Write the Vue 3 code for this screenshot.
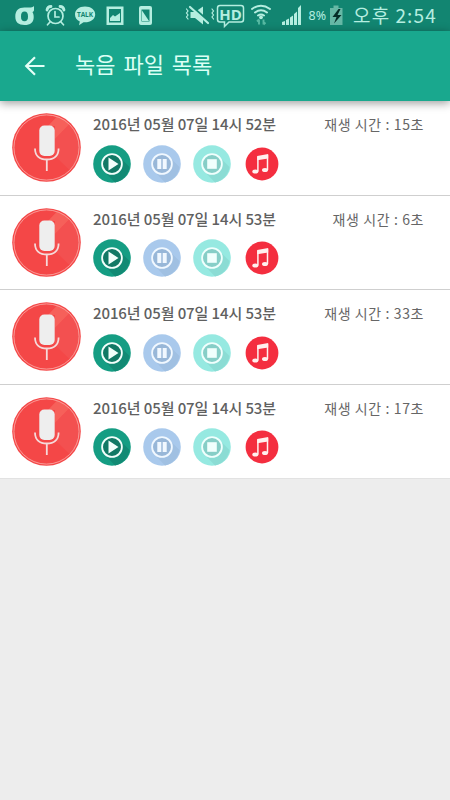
<template>
  <div class="screen">
    <div class="status-bar">
      <svg class="status-icons" width="345" height="31" viewBox="0 0 345 31">
        <g fill="#b5eee0">
          <path
            fill-rule="evenodd"
            d="M34 6v4c0 1-.7 1.600-1.600 2 .9 1.300 1.300 2.800 1.300 5 0 5.500-3.200 8-9.200 8s-9.200-2.700-9.200-8.500S18.500 7.500 24.500 7.500H29c2.400 0 4-.2 5-1.500zM24.500 11.500c-2.500 0-3.500 1.600-3.500 5s1 4.700 3.500 4.700 3.500-1.300 3.500-4.700-1-5-3.500-5z"
          />
          <path
            d="M85 6.500c-6 0-10 3.500-10 8 0 3.200 1.800 5.600 4.800 7l-.8 3.700 4.500-2.900c7 .5 11.700-3.200 11.700-7.800 0-4.500-4.200-8-10.200-8z"
          />
          <path fill-rule="evenodd" d="M106.500 6.500h17v18.500h-17zM109 9v13.500h12V9z" />
          <path d="M110 21v-3l3-3 2 1.500 5-3.500v8z" />
          <path
            fill-rule="evenodd"
            d="M141 6h9q2 0 2 2v15q0 2-2 2h-9q-2 0-2-2V8q0-2 2-2zM141.500 9.500v12h8v-12z"
          />
          <path d="M142 10.500l7 10.500h-7z" />
          <path d="M190.500 12h4.500l8-5.500v18l-8-6.500h-4.500z" />
          <path d="M282 25v-3l3-1v4zM286 25v-5l3-1.500V25zM290 25v-7.500l3-2V25zM294 25V14l3-2.500V25zM298 25V8l3-3v20z" />
          <circle cx="261" cy="17.300" r="1.900" />
        </g>
        <g fill="none" stroke="#b5eee0" stroke-width="1.700" stroke-linecap="round">
          <circle cx="55.500" cy="16" r="7.500" />
          <path d="M55 11.500V17h4M50 22l-2.500 2.800M61 22l2.500 2.800" />
          <path d="M47 10q.5-3.500 4-3.500M64 10q-.5-3.500-4-3.500" stroke-width="2.800" />
          <path d="M191 6l18 16" stroke="#128571" stroke-width="3" />
          <path d="M190 7l18 16" stroke-width="2.200" />
          <path
            d="M186.500 9l1.500 2-1.500 2 1.500 2-1.500 2 1.500 2M212 9l1.500 2-1.500 2 1.500 2-1.500 2 1.500 2"
            stroke-width="1.200"
          />
          <path
            d="M220 5.500h21q2.500 0 2.500 2.500v11.500q0 2.500-2.500 2.500h-12l-4.500 4.500V22H220q-2.500 0-2.500-2.500V8q0-2.500 2.500-2.500z"
            stroke-width="1.500"
          />
          <path d="M252 9q9-6.500 18 0M255 12.500q6-4.500 12 0M258 15.500q3-2 6 0" stroke-width="2" />
        </g>
        <path
          d="M259 24.500v-5M257 21.500l2-2M263.500 19.500v5M265.500 22.500l-2 2"
          fill="none"
          stroke="#57b9a2"
          stroke-width="1.900"
        />
        <text x="85" y="17.300" class="talk" text-anchor="middle">TALK</text>
        <text x="230.500" y="19.500" class="hd" text-anchor="middle">HD</text>
        <text x="308.500" y="19.800" class="percent" textLength="17.500" lengthAdjust="spacingAndGlyphs">8%</text>
        <path d="M330 8h3.500V5.500h5V8h4v17H330z" fill="#66b8a6" />
        <path d="M338.500 9l-6 8h4l-2.500 6.500 7.500-8.500h-4l3-6z" fill="#062e29" />
      </svg>
      <div class="clock"><span>오후</span><span>2:54</span></div>
    </div>

    <div class="toolbar">
      <svg class="back" width="22" height="22" viewBox="0 0 22 22">
        <path d="M20.500 11H2.500M11 2.200L2.200 11l8.800 8.800" />
      </svg>
      <h1>녹음 파일 목록</h1>
    </div>

    <ul class="record-list">
      <li v-for="(record, i) in records" :key="i" class="record">
        <svg class="mic" width="70" height="70" viewBox="0 0 70 70">
          <circle cx="34.500" cy="34.500" r="34.300" fill="#f44747" />
          <path d="M43 26L57.500 11A32.800 32.800 0 0 1 58 57.500L43 43z" fill="#f35050" />
          <path d="M43 26L57.500 11A32.800 32.800 0 0 0 45 3.500L36 13h7z" fill="#f6605a" />
          <circle cx="34.500" cy="34.500" r="32.600" fill="none" stroke="#fbb0ac" stroke-width=".8" />
          <rect x="27.300" y="12.500" width="15.400" height="30.500" rx="5" fill="#eee" />
          <path
            d="M23 35.500c0 7.300 4.700 11 11.800 11s11.800-3.700 11.800-11M34.800 46.500V58"
            fill="none"
            stroke="#f5dada"
            stroke-width="1.800"
          />
        </svg>

        <div class="body">
          <div class="info">
            <span class="date">{{ record.date }}</span>
            <span class="duration">재생 시간 : {{ record.seconds }}초</span>
          </div>

          <div class="controls">
            <button v-for="c in controls" :key="c.name" :class="c.name">
              <svg width="38" height="38" viewBox="0 0 38 38">
                <circle cx="19" cy="19" r="18.800" :fill="c.color" />
                <path d="M26.500 12L36.500 22A18.800 18.800 0 0 1 22 37.500L12 27z" :fill="c.shade" />
                <circle cx="19" cy="19" r="9.900" :fill="c.inner" :stroke="c.line" stroke-width="1.800" />
                <path :d="c.glyph" :fill="c.line" />
              </svg>
            </button>
            <button class="music">
              <svg width="34" height="34" viewBox="0 0 34 34">
                <circle cx="17" cy="17" r="16.400" fill="#f42e3f" />
                <path d="M12.900 9.500v15M22.500 8v15" fill="none" stroke="#fff0ee" stroke-width="1.500" />
                <path d="M12.200 9l11-1.900v4.300l-11 1.900z" fill="#fff0ee" />
                <ellipse cx="10.300" cy="24.500" rx="3" ry="2" fill="#fff0ee" />
                <ellipse cx="20" cy="22.900" rx="3" ry="2" fill="#fff0ee" />
              </svg>
            </button>
          </div>
        </div>
      </li>
    </ul>
  </div>
</template>

<script setup>
import { ref } from "vue";

const records = ref([
  { date: "2016년 05월 07일 14시 52분", seconds: 15 },
  { date: "2016년 05월 07일 14시 53분", seconds: 6 },
  { date: "2016년 05월 07일 14시 53분", seconds: 33 },
  { date: "2016년 05월 07일 14시 53분", seconds: 17 },
]);

const controls = [
  {
    name: "play",
    color: "#159d83",
    shade: "#128a74",
    inner: "#117965",
    line: "#f2fffb",
    glyph: "M15.500 12.500v13l10-6.500z",
  },
  {
    name: "pause",
    color: "#a9c9ec",
    shade: "#a0c0e2",
    inner: "#98b7d8",
    line: "#f1f8ff",
    glyph: "M14.300 14h4v10h-4zM19.700 14h4v10h-4z",
  },
  {
    name: "stop",
    color: "#96e9e1",
    shade: "#8bdcd4",
    inner: "#86cec7",
    line: "#f0fffd",
    glyph: "M14.200 14.200h9.600v9.600h-9.600z",
  },
];
</script>

<style>
body {
  background: #ededed;
}
</style>

<style scoped>
.screen {
  height: 800px;
  overflow: hidden;
  background: #ededed;
  font-family: "Noto Sans CJK KR", sans-serif;
}

.status-bar {
  display: flex;
  align-items: center;
  height: 31px;
  background: #128571;
  color: #b5eee0;
}

.status-icons {
  flex: none;
}

.talk {
  font: bold 6.5px "Open Sans", sans-serif;
  fill: #128571;
}

.hd {
  font: bold 15px "Open Sans", sans-serif;
  fill: #b5eee0;
}

.percent {
  font: 13px "Noto Sans", sans-serif;
  fill: #b5eee0;
}

.clock {
  display: flex;
  gap: 5px;
  margin-left: 8px;
  font-size: 19px;
  line-height: 29px;
  height: 31px;
  letter-spacing: 1.2px;
  white-space: nowrap;
}

.toolbar {
  position: relative;
  display: flex;
  align-items: center;
  height: 70px;
  padding-left: 24px;
  background: #19a88e;
  box-shadow: 0 2px 9px rgba(0, 0, 0, 0.4);
}

.back {
  fill: none;
  stroke: #e3fff7;
  stroke-width: 2.2;
}

.toolbar h1 {
  margin: 0 0 7px 29px;
  color: #dcfff5;
  font-size: 22px;
  font-weight: 400;
  line-height: 32px;
  word-spacing: 3px;
}

.record-list {
  margin: 0;
  padding: 0;
  list-style: none;
}

.record {
  display: flex;
  box-sizing: border-box;
  height: 94.6px;
  padding: 12px 26px 0 12px;
  border-bottom: 1px solid #cfcfcf;
  background: #fff;
}

.record:last-child {
  border-bottom-color: #e2e2e2;
}

.mic {
  flex: none;
}

.body {
  flex: 1;
  margin-left: 11px;
}

.info {
  display: flex;
  justify-content: space-between;
  height: 24px;
  line-height: 22px;
  white-space: nowrap;
}

.date {
  color: #606060;
  font-size: 15px;
  font-weight: 500;
  letter-spacing: -0.1px;
}

.duration {
  color: #666;
  font-size: 14px;
  letter-spacing: 0.6px;
}

.controls {
  display: flex;
  align-items: center;
  gap: 12px;
  margin-top: 7.5px;
}

.controls button {
  display: flex;
  padding: 0;
  border: none;
  background: none;
  cursor: pointer;
}

.controls .music {
  margin-left: 2px;
}
</style>
